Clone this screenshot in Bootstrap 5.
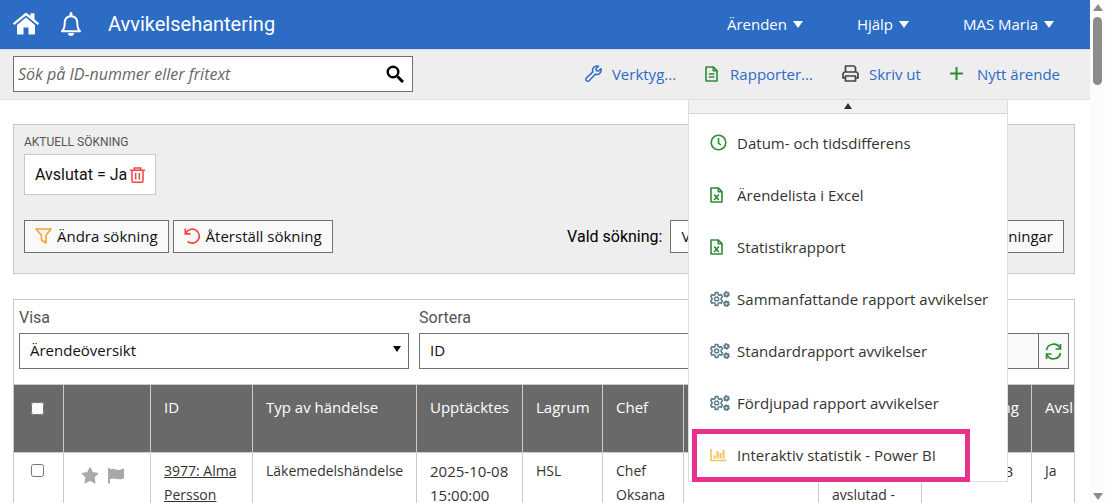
<!DOCTYPE html>
<html lang="sv">
<head>
<meta charset="utf-8">
<meta name="viewport" content="width=device-width, initial-scale=1">
<title>Avvikelsehantering</title>
<link rel="stylesheet" href="https://cdn.jsdelivr.net/npm/bootstrap@5.3.0/dist/css/bootstrap.min.css">
<style>
:root{--ui:"Open Sans","Noto Sans",sans-serif;--rb:Roboto,"Liberation Sans",sans-serif;--line:#c8c8c8;--edge:#707070}
body{font-family:var(--ui);font-size:15px;line-height:24px;color:#333;height:100vh;overflow:hidden}
svg{display:block;flex:none}
.rb{font-family:var(--rb);font-size:16px}
.topbar{background:#2c6cc5;height:49px;padding:0 36px 2px 12px}
.topbar a{color:#fff;text-decoration:none}
.topbar h1{font:20px/24px var(--rb);margin:0 0 0 26px}
.topbar nav{gap:54px}
.caret{font-size:0;display:inline-block;border:5px solid transparent;border-top:7px solid currentColor;border-bottom:0}
.topbar .caret{margin-left:2px;vertical-align:2px}
.toolbar{background:#eee;height:51px;border-top:1px solid #ddd;border-bottom:1px solid #ddd;padding:0 30px 2px 13px}
.toolbar .tool{color:#2c6cc5;text-decoration:none;gap:10px}
.search{width:400px;height:36px;background:#fff;border:1px solid var(--edge)}
.search input{font:italic 16px/24px var(--ui);border:0;padding:0 4px;outline:0;min-width:0}
.search input::placeholder{color:#666;opacity:1}
.search button{border:0;background:none;padding:0 8px}
.tools{gap:29px}
.report-menu{position:absolute;top:24px;left:-17px;margin-top:13px;width:320px;background:#fff;border:1px solid #ddd;z-index:10}
.menu-up{height:14px;background:#f1f1f1;border-bottom:1px solid #d5d5d5}
.menu-up i{border:4px solid transparent;border-bottom:6px solid #333;border-top:0}
.report-menu li{height:52px;padding:0 0 0 21px}
.report-menu ul{padding:3px 0 0;margin:0}
.report-menu li a{height:52px;color:#333;text-decoration:none;white-space:nowrap}
.report-menu .ico{width:27px}
.marked{position:relative}
.marked::after{content:"";position:absolute;inset:0 37px -1px 3px;border:5px solid #e8308c;pointer-events:none}
.content-area{padding:24px 15px 0 13px}
.panel-box{background:#eee;border:1px solid var(--line);padding:5px 10px 20px;margin-bottom:25px}
.caption{font:12px/24px var(--rb);color:#555}
.chip{background:#fff;border:1px solid var(--line);height:41px;padding:0 10px;gap:3px;color:#111}
.chip button{border:0;background:none;padding:0}
.search-actions{margin-top:25px}
.btn-line{background:#f9f9f9;border:1px solid var(--edge);border-radius:0;height:33px;padding:0 10px 1px;color:#111;font:15px/24px var(--ui);gap:5px}
.saved-select{appearance:none;width:234px}
.box-select{appearance:none;background:#fff;border:1px solid var(--edge);border-radius:0;height:36px;width:100%;padding:0 10px 3px;color:#111;font:15px/24px var(--ui)}
.box-button{appearance:none;background:#f9f9f9;border:1px solid var(--edge);height:36px;padding:0 6px}
.box-button+.box-button{margin-left:-1px}
.select-wrap{position:relative}
.select-wrap .caret{position:absolute;right:8px;top:13px;border-width:6px 4px 0;color:#000;pointer-events:none}
.list-box{border:1px solid var(--line);overflow:hidden}
.filters{padding:6px 5px 15px;gap:10px}
.filters label{font:16px/24px var(--rb);color:#555;margin-bottom:3px}
.w-visa{width:390px}
.grid-table{table-layout:fixed;width:1120px;border-collapse:collapse;margin-left:-1px}
.grid-table th,.grid-table td{border:1px solid #ccc;vertical-align:top;padding:6px 13px;font-weight:400}
.grid-table td{font-size:14px}
.grid-table td.when{font-size:15px}
.grid-table th{background:#696969;color:#fff;height:68px;padding-top:10px;white-space:nowrap}
.grid-table td a{color:#333}
.grid-table input{display:block;width:13px;height:13px;margin:5px 0 0 4px}
.grid-table th input{margin-top:7px}
.page-scroll{width:15px;height:100vh;background:#fcfcfc}
.page-scroll i{border:5px solid transparent}
.sc-up{border-bottom:7px solid #8b8b8b!important;border-top:0!important;margin:4px 0 6px}
.sc-thumb{width:9px;height:68px;border-radius:5px;background:#8b8b8b}
.sc-down{border-top:7px solid #8b8b8b!important;border-bottom:0!important;margin:auto 0 3px}
.app-col{min-width:0;height:100vh;overflow:hidden}
</style>
</head>
<body>
<svg width="0" height="0" class="position-absolute" aria-hidden="true">
<symbol id="gears" viewBox="0 0 20 16"><g fill="none" stroke="#5d7c8c"><path stroke-width="1.6" d="M5.400 1.500h2.400l.4 2 1.400.8 1.700-.6 1.200 2-1.300 1.500v1.500l1.300 1.500-1.200 2-1.700-.6-1.400.8-.4 2H5.400L5 12.400l-1.400-.8-1.700.6-1.200-2L2 8.700V7.200L.7 5.700l1.200-2 1.700.6L5 3.500z"/><circle cx="6.600" cy="8" r="2" stroke-width="1.500"/><circle cx="16.500" cy="3.300" r="1.900" stroke-width="1.900"/><circle cx="16.500" cy="12.700" r="1.900" stroke-width="1.900"/><circle cx="16.500" cy="3.300" r="2.900" stroke-width="1" stroke-dasharray="1.500"/><circle cx="16.500" cy="12.700" r="2.900" stroke-width="1" stroke-dasharray="1.500"/></g></symbol>
<symbol id="excel" viewBox="0 0 13 16"><path fill="none" stroke="#2e8b36" stroke-width="1.600" stroke-linejoin="round" d="M1 1h7.500L12 4.500V15H1zM8.300 1v3.800H12"/><path d="M4.200 7.500l4.600 5.500M8.800 7.500L4.200 13" stroke="#2e8b36" stroke-width="1.700"/></symbol>
</svg>
<div class="d-flex">
<div class="app-col flex-grow-1">
<header class="topbar d-flex align-items-center">
<a href="#" aria-label="Hem"><svg width="28" height="24" viewBox="0 0 28 24" fill="#fff"><path d="M14 5.500L5 13v8.500c0 .6.300 1 1 1h5.500v-7h5v7H22c.7 0 1-.4 1-1V13z"/><path d="M22.500 7.500V1.200h-4v2.900L15.300 1.400a2 2 0 0 0-2.600 0L.8 11.300l1.500 1.800L14 3.400l11.700 9.700 1.500-1.800z"/></svg></a>
<a href="#" aria-label="Aviseringar" class="ms-3 ps-1"><svg width="22" height="24" viewBox="0 0 22 24"><path d="M2 19.300c2.500-2.300 2.700-4.300 2.700-8C4.700 7 7 4.300 11 4.300s6.300 2.700 6.300 7c0 3.700.2 5.700 2.700 8z" fill="none" stroke="#fff" stroke-width="2" stroke-linejoin="round"/><path d="M11 0c.8 0 1.400.6 1.400 1.400V4H9.600V1.400C9.600.6 10.200 0 11 0zM8 21h6a3 3 0 0 1-6 0z" fill="#fff"/></svg></a>
<h1 class="text-white">Avvikelsehantering</h1>
<nav class="d-flex ms-auto">
<a href="#">Ärenden <span class="caret"></span></a><a href="#">Hjälp <span class="caret"></span></a><a href="#">MAS Maria <span class="caret"></span></a>
</nav>
</header>
<div class="toolbar d-flex align-items-center justify-content-between">
<form class="search d-flex"><input class="flex-grow-1" type="text" aria-label="Sök" placeholder="Sök på ID-nummer eller fritext"><button type="button" aria-label="Sök"><svg width="18" height="18" viewBox="0 0 18 18" fill="none" stroke="#000"><circle cx="7" cy="7" r="5.300" stroke-width="2.400"/><path stroke-width="3" d="M11.500 11.500l5.500 5.500"/></svg></button></form>
<nav class="tools d-flex">
<a href="#" class="tool d-flex align-items-center"><svg width="17" height="17" viewBox="0 0 17 17" fill="none" stroke="#2c6cc5" stroke-width="1.500" stroke-linejoin="round"><path d="M13.500 1.300a4.400 4.400 0 0 0-5.700 5.600L1.400 13a1.900 1.900 0 0 0 2.700 2.700l6.200-6.400a4.400 4.400 0 0 0 5.600-5.600l-2.500 2.400-2-.4-.4-2z"/></svg>Verktyg...</a>
<div class="position-relative">
<a href="#" class="tool d-flex align-items-center" aria-expanded="true"><svg width="15" height="16" viewBox="0 0 15 16" fill="none" stroke="#2e8b36" stroke-width="1.600" stroke-linejoin="round"><path d="M1 1h7.500L12 4.500V15H1zM8.300 1v3.800H12M3.800 8h5.500M3.800 11h5.500"/></svg>Rapporter...</a>
<div class="report-menu">
<div class="menu-up d-flex align-items-center justify-content-center"><i></i></div>
<ul class="list-unstyled">
<li><a href="#" class="d-flex align-items-center"><span class="ico"><svg width="17" height="17" viewBox="0 0 17 17" fill="none" stroke="#2e8b36" stroke-width="1.600"><circle cx="8.500" cy="8.500" r="7.300"/><path d="M8.500 4v5l2.500 2"/></svg></span>Datum- och tidsdifferens</a></li>
<li><a href="#" class="d-flex align-items-center"><span class="ico"><svg width="13" height="16"><use href="#excel"/></svg></span>Ärendelista i Excel</a></li>
<li><a href="#" class="d-flex align-items-center"><span class="ico"><svg width="13" height="16"><use href="#excel"/></svg></span>Statistikrapport</a></li>
<li><a href="#" class="d-flex align-items-center"><span class="ico"><svg width="20" height="16"><use href="#gears"/></svg></span>Sammanfattande rapport avvikelser</a></li>
<li><a href="#" class="d-flex align-items-center"><span class="ico"><svg width="20" height="16"><use href="#gears"/></svg></span>Standardrapport avvikelser</a></li>
<li><a href="#" class="d-flex align-items-center"><span class="ico"><svg width="20" height="16"><use href="#gears"/></svg></span>Fördjupad rapport avvikelser</a></li>
<li class="marked"><a href="#" class="d-flex align-items-center"><span class="ico"><svg width="17" height="14" viewBox="0 0 17 14" fill="none" stroke="#edc558" stroke-width="1.600"><path d="M1 1v11.500h15.500"/><path stroke-width="2" d="M4.500 10.500v-3M7.500 10.500V3M10.500 10.500V5M13.500 10.500V2"/></svg></span>Interaktiv statistik - Power BI</a></li>
</ul>
</div>
</div>
<a href="#" class="tool d-flex align-items-center"><svg width="17" height="17" viewBox="0 0 17 17" fill="none" stroke="#444" stroke-width="1.700" stroke-linejoin="round"><path d="M3.500 7V1H12l1.500 1.500V7M3 13H1V8.500L2.500 7h12L16 8.500V13h-2M3.500 11h10v5h-10z"/></svg>Skriv ut</a>
<a href="#" class="tool d-flex align-items-center"><svg class="me-1" width="13" height="13" viewBox="0 0 13 13" stroke="#2e8b36" stroke-width="2"><path d="M6.500 0v13M0 6.500h13"/></svg>Nytt ärende</a>
</nav>
</div>
<main class="content-area">
<section class="panel-box">
<div class="caption">AKTUELL SÖKNING</div>
<div class="d-flex"><div class="chip rb d-flex align-items-center"><span>Avslutat = Ja</span><button type="button" aria-label="Ta bort"><svg width="15" height="16" viewBox="0 0 15 16" fill="none" stroke="#f5473f" stroke-width="1.500"><path d="M0 3.300h15M4.300 3V1h6.400v2M2 3.500V14c0 .8.400 1.200 1.200 1.200h8.600c.8 0 1.200-.4 1.200-1.200V3.500M5.700 6v6.500M9.300 6v6.500"/></svg></button></div></div>
<div class="search-actions d-flex align-items-center">
<button type="button" class="btn-line d-flex align-items-center me-1"><svg width="17" height="16" viewBox="0 0 17 16" fill="none" stroke="#f7a035" stroke-width="1.600" stroke-linejoin="round"><path d="M1 1h15l-5 6.200V15l-4.500-3V7.200z"/></svg>Ändra sökning</button>
<button type="button" class="btn-line d-flex align-items-center"><svg width="17" height="17" viewBox="0 0 17 17" fill="none" stroke="#f5473f" stroke-width="1.700"><path d="M1.300.5v5.300h5.300M1.800 5.500A7 7 0 1 1 3.500 13.300"/></svg>Återställ sökning</button>
<label for="saved" class="rb text-black ms-auto me-2">Vald sökning:</label>
<select id="saved" class="btn-line saved-select bg-white"><option>Välj sökning</option></select>
<button type="button" class="btn-line ms-2">Hantera sökningar</button>
</div>
</section>
<section class="list-box">
<div class="filters d-flex align-items-end">
<div class="w-visa"><label for="visa" class="d-block">Visa</label><div class="select-wrap"><select id="visa" class="box-select"><option>Ärendeöversikt</option></select><span class="caret"></span></div></div>
<div class="flex-grow-1"><label for="sort" class="d-block">Sortera</label><div class="d-flex"><select id="sort" class="box-select"><option>ID</option></select><button type="button" class="box-button px-4" aria-label="Ordning"></button><button type="button" class="box-button" aria-label="Uppdatera"><svg width="17" height="17" viewBox="0 0 17 17" fill="none" stroke="#2e8b36" stroke-width="1.700"><path d="M1.500 7A7.200 7.200 0 0 1 15 5.200M15.500 1v5h-5M15.500 10A7.200 7.200 0 0 1 2 11.800M1.500 16v-5h5"/></svg></button></div></div>
</div>
<table class="grid-table">
<colgroup><col style="width:50px"><col style="width:87px"><col style="width:102px"><col style="width:164px"><col style="width:106px"><col style="width:80px"><col style="width:81px"><col style="width:135px"><col style="width:103px"><col style="width:110px"><col></colgroup>
<thead><tr><th><input type="checkbox" aria-label="Markera alla"></th><th></th><th>ID</th><th>Typ av händelse</th><th>Upptäcktes</th><th>Lagrum</th><th>Chef</th><th></th><th>Status</th><th>Registrering</th><th>Avslutat</th></tr></thead>
<tbody><tr><td><input type="checkbox" aria-label="Markera 3977"></td>
<td><div class="d-flex pt-2 ps-1 gap-2"><svg width="18" height="17" viewBox="0 0 18 17" fill="#a8a8a8"><path d="M9 .5l2.500 5.100 5.600.8-4 4 1 5.700L9 13.400l-5.100 2.700 1-5.700-4-4 5.600-.8z" stroke="#a8a8a8" stroke-linejoin="round"/></svg><svg width="18" height="17" viewBox="0 0 18 17" fill="#a8a8a8"><path d="M1 1h2v15.500H1z"/><path d="M3 2.500c4-2 6 1.500 9.500.3L17 1.500v9.800c-6 3-7.500-1.600-14 .8z"/></svg></div></td>
<td><a href="#">3977: Alma Persson</a></td><td>Läkemedelshändelse</td><td class="when">2025-10-08 15:00:00</td><td>HSL</td><td>Chef Oksana</td><td></td><td>Utredning avslutad -</td><td class="when">2025-10-13</td><td>Ja</td></tr></tbody>
</table>
</section>
</main>
</div>
<div class="page-scroll d-flex flex-column align-items-center flex-shrink-0" aria-hidden="true"><i class="sc-up"></i><div class="sc-thumb"></div><i class="sc-down"></i></div>
</div>
<script src="https://cdn.jsdelivr.net/npm/bootstrap@5.3.0/dist/js/bootstrap.bundle.min.js"></script>
</body>
</html>
